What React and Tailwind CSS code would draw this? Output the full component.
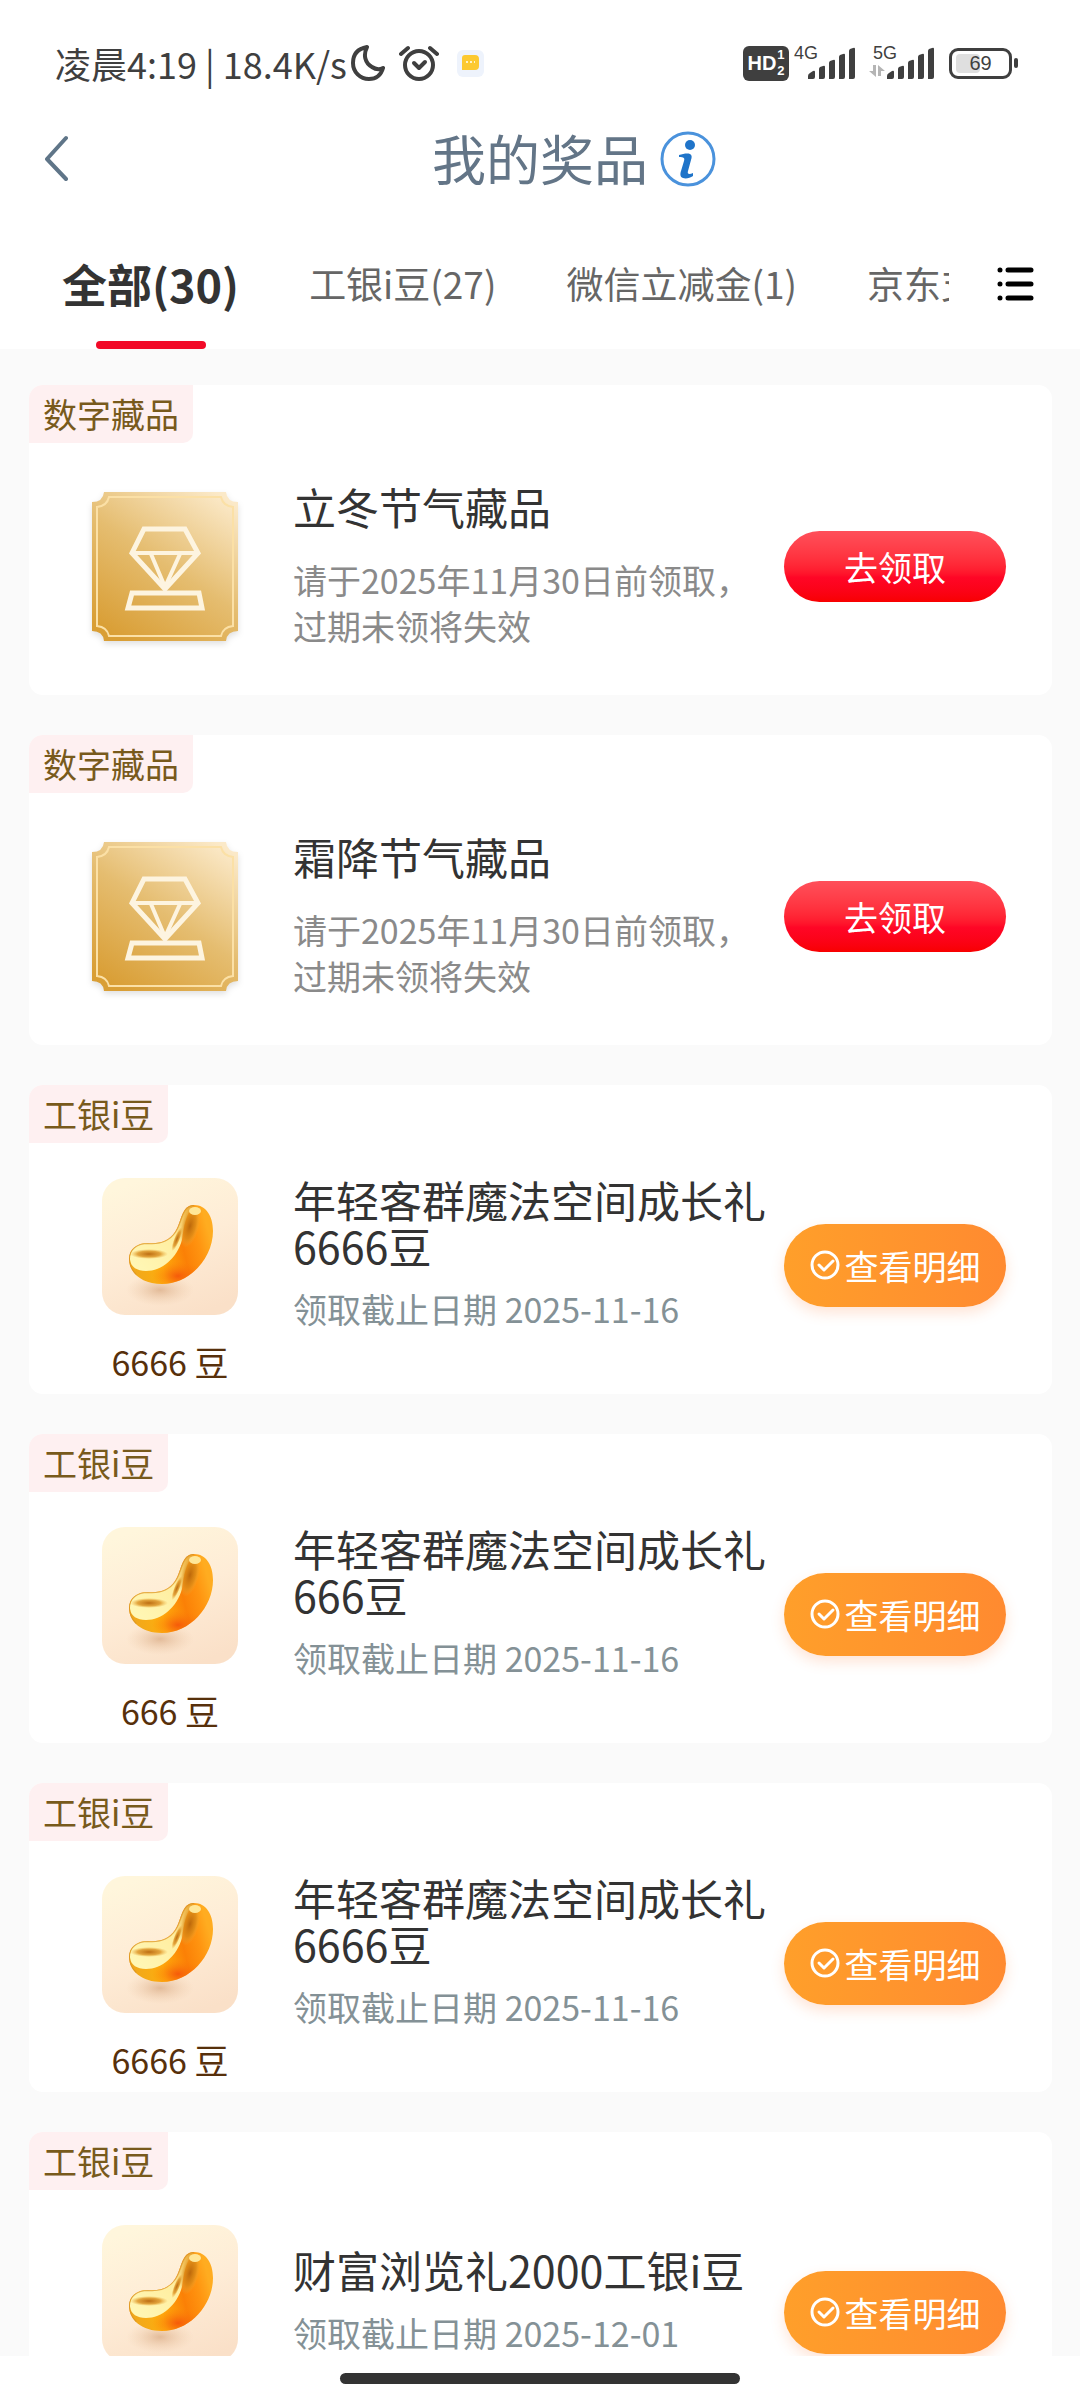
import React, { useState } from "react";

const tabs = [
  { id: "all", label: "全部(30)" },
  { id: "beans", label: "工银i豆(27)" },
  { id: "wechat", label: "微信立减金(1)" },
  { id: "jd", label: "京东支付立减金(1)" },
];

const prizes = [
  { id: 1, type: "nft", tag: "数字藏品", title: "立冬节气藏品", desc: "请于2025年11月30日前领取，过期未领将失效" },
  { id: 2, type: "nft", tag: "数字藏品", title: "霜降节气藏品", desc: "请于2025年11月30日前领取，过期未领将失效" },
  { id: 3, type: "bean", tag: "工银i豆", title: "年轻客群魔法空间成长礼6666豆", amount: "6666 豆", date: "2025-11-16" },
  { id: 4, type: "bean", tag: "工银i豆", title: "年轻客群魔法空间成长礼666豆", amount: "666 豆", date: "2025-11-16" },
  { id: 5, type: "bean", tag: "工银i豆", title: "年轻客群魔法空间成长礼6666豆", amount: "6666 豆", date: "2025-11-16" },
  { id: 6, type: "bean", tag: "工银i豆", title: "财富浏览礼2000工银i豆", date: "2025-12-01" },
];

const SignalBars = () => (
  <svg width="48" height="32" viewBox="0 0 48 32" fill="#3f3f3f">
    <path d="M0 32v-3q0-2 2-3l3-2q2-1 2 1v5q0 2-2 2z" />
    <path d="M11 32V22q0-1 1-2l3-1q2-1 2 1v10q0 2-2 2z" />
    <path d="M21 32V16q0-1 1-2l3-1q2-1 2 1v16q0 2-2 2z" />
    <path d="M31 32V10q0-1 1-2l3-1q2-1 2 1v22q0 2-2 2z" />
    <path d="M41 32V4q0-1 1-2l3-1q2-1 2 1v28q0 2-2 2z" />
  </svg>
);

const StatusBar = () => (
  <div className="flex h-[126px] shrink-0 items-center justify-between pr-[62px] pl-[55px] text-[#3f3f3f]">
    <div className="flex items-center">
      <span className="text-4xl">凌晨4:19 | 18.4K/s</span>
      <svg className="ml-1" width="34" height="36" viewBox="0 0 34 36" fill="none" stroke="#3f3f3f" strokeWidth="4" strokeLinejoin="round">
        <path d="M16 2C5 4 2 11 2 18c0 9 7 16 16 16 7 0 12-4 14-11-4 2-8 1-11-1-7-4-9-12-5-20z" />
      </svg>
      <svg className="ml-3.5" width="40" height="37" viewBox="0 0 40 37" fill="none" stroke="#3f3f3f" strokeWidth="4" strokeLinecap="round">
        <circle cx="20" cy="20" r="14" />
        <path d="M2 9l7-6M38 9l-7-6" />
        <path d="M15 18l5 5 6-6" strokeLinejoin="round" />
      </svg>
      <svg className="ml-[18px]" width="27" height="27" viewBox="0 0 27 27">
        <rect width="27" height="27" rx="6" fill="#eef3fc" />
        <path d="M8 5h10q4 0 4 4v7q0 4-4 4H5V8q0-3 3-3z" fill="#fcc931" />
        <path d="M9 12h2M13 12h2M17 12h1" stroke="#fff3c4" strokeWidth="2" />
      </svg>
    </div>

    <div className="flex items-center">
      <div className="flex h-[35px] w-[46px] items-center justify-center gap-px rounded-md bg-[#3f3f3f] font-[Liberation_Sans] font-bold text-white">
        <span className="text-xl leading-6">HD</span>
        <span className="flex flex-col text-[13px] leading-4">
          <span>1</span>
          <span>2</span>
        </span>
      </div>
      <div className="relative ml-[19px] h-8">
        <span className="absolute -top-1 -left-3.5 font-[Liberation_Sans] text-lg leading-5">4G</span>
        <SignalBars />
      </div>
      <div className="relative ml-[31px] h-8">
        <span className="absolute -top-1 -left-3.5 font-[Liberation_Sans] text-lg leading-5">5G</span>
        <svg className="absolute bottom-0.5 -left-[18px]" width="16" height="12" viewBox="0 0 16 12" fill="#b5b5b5">
          <path d="M4 0h3v12L0 6h4zM9 0l7 6h-4v5H9z" />
        </svg>
        <SignalBars />
      </div>
      <div className="ml-3.5 flex items-center gap-0.5">
        <div className="relative flex h-[31px] w-[63px] items-center justify-center rounded-[9px] border-3 border-[#3f3f3f]">
          <div className="absolute top-[3px] left-1 h-[19px] w-6 rounded-sm bg-[#dfdfdf]" />
          <span className="relative font-[Liberation_Sans] text-xl leading-6">69</span>
        </div>
        <div className="h-2.5 w-1 rounded-sm bg-[#3f3f3f]" />
      </div>
    </div>
  </div>
);

const Header = () => (
  <header className="grid h-16 shrink-0 grid-cols-[1fr_auto_1fr] items-center">
    <button type="button" aria-label="返回" className="ml-11 w-fit">
      <svg width="24" height="46" viewBox="0 0 24 46" fill="none" stroke="#5f7588" strokeWidth="4" strokeLinecap="round" strokeLinejoin="round">
        <path d="M22 3L3 24l19 20" />
      </svg>
    </button>
    <h1 className="text-[54px] leading-[64px] text-[#637587]">我的奖品</h1>
    <button type="button" aria-label="说明" className="ml-3 w-fit">
      <svg width="57" height="58" viewBox="0 0 57 58">
        <circle cx="28" cy="30" r="26" fill="#fff" stroke="#4a92dc" strokeWidth="3" />
        <circle cx="30" cy="16" r="5" fill="#1f74c9" />
        <path d="M19 26c4-1 8-2 11-1 2 1 2 3 1 6l-3 11c-1 3 1 4 5 2v3c-3 2-7 3-10 2s-3-4-2-7l3-10c1-3 0-4-5-4z" fill="#1f74c9" />
      </svg>
    </button>
  </header>
);

const TabBar = ({ active, onChange }) => (
  <div className="flex h-[159px] shrink-0 items-stretch">
    <nav className="mr-12 ml-[62px] flex min-w-0 flex-1 gap-[70px] overflow-hidden">
      {tabs.map((tab) => (
        <button
          key={tab.id}
          type="button"
          onClick={() => onChange(tab.id)}
          className={
            active === tab.id
              ? "relative shrink-0 pt-7 text-[45px] font-bold whitespace-nowrap text-[#333]"
              : "relative shrink-0 pt-7 text-[37px] whitespace-nowrap text-[#666]"
          }
        >
          {tab.label}
          {active === tab.id && (
            <span className="absolute bottom-0 left-1/2 h-2 w-[110px] -translate-x-1/2 rounded-full bg-[#f20a28]" />
          )}
        </button>
      ))}
    </nav>
    <button type="button" aria-label="全部分类" className="mr-[46px] pt-7">
      <svg width="37" height="36" viewBox="0 0 37 36" stroke="#000" strokeWidth="5" strokeLinecap="round">
        <path d="M3 4h0M11 4h23M3 18h0M11 18h23M3 32h0M11 32h23" />
      </svg>
    </button>
  </div>
);

const GemIcon = () => (
  <svg className="drop-shadow-md" width="146" height="149" viewBox="0 0 146 149">
    <defs>
      <linearGradient id="gem-bg" x1="0.2" y1="1" x2="0.85" y2="0">
        <stop offset="0" stopColor="#d99e35" />
        <stop offset="0.5" stopColor="#e5bd70" />
        <stop offset="1" stopColor="#fbe9c8" />
      </linearGradient>
    </defs>
    <path d="M12 0h122q1 10 12 10v129q-11 0-12 10H12q-1-10-12-10V10q11 0 12-10z" fill="url(#gem-bg)" />
    <path d="M17 5h112q2 9 12 10v119q-10 1-12 10H17q-2-9-12-10V15q10-1 12-10z" fill="none" stroke="#fbe0a6" strokeWidth="2" />
    <g fill="none" stroke="#fdf4e0" strokeWidth="5">
      <path d="M52 37h41l13 24-33 36-33-36z" />
      <path d="M40 61h66M59 62l14 33 15-33" strokeWidth="4" />
      <path d="M40 101h67l3 15H36z" />
    </g>
  </svg>
);

const BeanIcon = () => (
  <svg width="136" height="137" viewBox="0 0 136 137">
    <defs>
      <linearGradient id="bean-bg" x1="0.3" y1="0" x2="0.7" y2="1">
        <stop offset="0" stopColor="#fff6dc" />
        <stop offset="0.5" stopColor="#feecd6" />
        <stop offset="1" stopColor="#fae0c8" />
      </linearGradient>
      <linearGradient id="bean-body" x1="0.1" y1="0.7" x2="0.9" y2="0.5">
        <stop offset="0" stopColor="#f0a81c" />
        <stop offset="0.35" stopColor="#ffae0c" />
        <stop offset="0.65" stopColor="#fb8006" />
        <stop offset="0.85" stopColor="#ff9410" />
        <stop offset="1" stopColor="#ffac20" />
      </linearGradient>
      <linearGradient id="bean-shine" x1="0" y1="1" x2="1" y2="0">
        <stop offset="0" stopColor="#fff8b8" />
        <stop offset="0.6" stopColor="#ffeea0" />
        <stop offset="1" stopColor="#e8a22a" />
      </linearGradient>
      <radialGradient id="bean-shadow">
        <stop offset="0" stopColor="#c98f62" stopOpacity="0.5" />
        <stop offset="1" stopColor="#e6bd98" stopOpacity="0" />
      </radialGradient>
      <radialGradient id="bean-glow">
        <stop offset="0" stopColor="#f4500a" stopOpacity="0.85" />
        <stop offset="1" stopColor="#fb7c08" stopOpacity="0" />
      </radialGradient>
      <radialGradient id="bean-dent">
        <stop offset="0" stopColor="#b9660a" stopOpacity="0.95" />
        <stop offset="0.6" stopColor="#d98a18" stopOpacity="0.75" />
        <stop offset="1" stopColor="#eeae3c" stopOpacity="0" />
      </radialGradient>
      <clipPath id="bean-clip">
        <path d="M92 27C104 27 111 38 111 53 111 80 88 106 60 106 40 106 27 95 27 81 27 71 35 65 46 65 58 66 67 63 73 54 80 44 79 27 92 27z" />
      </clipPath>
    </defs>
    <rect width="136" height="137" rx="23" fill="url(#bean-bg)" />
    <ellipse cx="58" cy="112" rx="34" ry="16" fill="url(#bean-shadow)" />
    <g clipPath="url(#bean-clip)">
      <rect x="20" y="20" width="100" height="95" fill="url(#bean-body)" />
      <ellipse cx="76" cy="98" rx="26" ry="15" fill="url(#bean-glow)" />
      <path d="M28 82C27 72 34 65 46 65 58 66 67 63 73 54 80 44 79 27 92 27 84 36 82 48 80 62 75 80 60 93 44 93 35 93 29 89 28 82z" fill="url(#bean-shine)" />
      <ellipse cx="47" cy="76" rx="19" ry="5" fill="url(#bean-dent)" />
      <ellipse cx="88" cy="48" rx="9" ry="22" transform="rotate(14 88 48)" fill="url(#bean-dent)" />
      <ellipse cx="75" cy="61" rx="3" ry="13" transform="rotate(22 75 61)" fill="url(#bean-dent)" />
      <ellipse cx="93" cy="33" rx="6" ry="4" fill="#ffe798" />
      <path d="M92 27C79 27 80 44 73 54 67 63 58 66 46 65 35 65 27 71 27 81 27 87 30 93 34 97" fill="none" stroke="#d89022" strokeWidth="2" opacity="0.7" />
    </g>
  </svg>
);

const PrizeCard = ({ prize }) => {
  const isBean = prize.type === "bean";

  return (
    <li
      className={
        isBean
          ? "flex min-h-[309px] shrink-0 flex-col rounded-[14px] bg-white"
          : "flex min-h-[310px] shrink-0 flex-col rounded-[14px] bg-white"
      }
    >
      <span className="self-start rounded-tl-[14px] rounded-br-[10px] bg-[#fef0f1] px-3.5 text-[34px] leading-[58px] text-[#785a1c]">
        {prize.tag}
      </span>
      <div className="flex flex-1 items-center pb-1.5">
        {isBean ? (
          <div className="flex w-[264px] shrink-0 flex-col self-start pt-[35px] pl-[73px]">
            <div className="flex w-[136px] flex-col items-center gap-6">
              <BeanIcon />
              {prize.amount && (
                <span className="text-[34px] leading-[46px] whitespace-nowrap text-[#57300b]">{prize.amount}</span>
              )}
            </div>
          </div>
        ) : (
          <div className="w-[264px] shrink-0 pl-[63px]">
            <GemIcon />
          </div>
        )}

        {isBean ? (
          <div className="min-w-0 flex-1 pr-2 pb-6">
            <h2 className="text-[43px] leading-[46px] text-[#333]">{prize.title}</h2>
            <p className="mt-4.5 text-[34px] leading-[46px] text-[#849196]">领取截止日期 {prize.date}</p>
          </div>
        ) : (
          <div className="min-w-0 flex-1 pr-2">
            <h2 className="text-[43px] leading-[46px] text-[#333]">{prize.title}</h2>
            <p className="mt-7 text-[34px] leading-[46px] text-[#8a8a8a]">{prize.desc}</p>
          </div>
        )}

        {isBean ? (
          <button
            type="button"
            className="mr-[46px] flex h-[83px] w-[222px] shrink-0 items-center justify-center gap-1 rounded-full bg-linear-to-r from-[#ff9f2a] to-[#ff8a30] text-[34px] text-white shadow-[0_6px_14px_rgba(255,120,50,0.2)]"
          >
            <svg width="31" height="31" viewBox="0 0 31 31" fill="none" stroke="#fff" strokeWidth="3" strokeLinecap="round" strokeLinejoin="round">
              <circle cx="15" cy="15" r="13" />
              <path d="M9 15l5 5 9-9" />
            </svg>
            查看明细
          </button>
        ) : (
          <button
            type="button"
            className="mr-[46px] h-[71px] w-[222px] shrink-0 rounded-full bg-linear-to-b from-[#ff4f5a] via-[#ff0626] via-65% to-[#f80000] text-[34px] text-white"
          >
            去领取
          </button>
        )}
      </div>
    </li>
  );
};

export default function App() {
  const [active, setActive] = useState("all");

  return (
    <div className="flex h-screen flex-col bg-white font-['Noto_Sans_CJK_SC',sans-serif]">
      <StatusBar />
      <Header />
      <TabBar active={active} onChange={setActive} />

      <main className="min-h-0 flex-1 overflow-hidden bg-[#fafafa]">
        <ul className="flex flex-col gap-10 pt-9 pr-7 pl-[29px]">
          {prizes.map((prize) => (
            <PrizeCard key={prize.id} prize={prize} />
          ))}
        </ul>
      </main>

      {/* home indicator */}
      <div className="flex h-11 shrink-0 items-center justify-center">
        <div className="h-[11px] w-[37%] rounded-full bg-[#333]" />
      </div>
    </div>
  );
}
